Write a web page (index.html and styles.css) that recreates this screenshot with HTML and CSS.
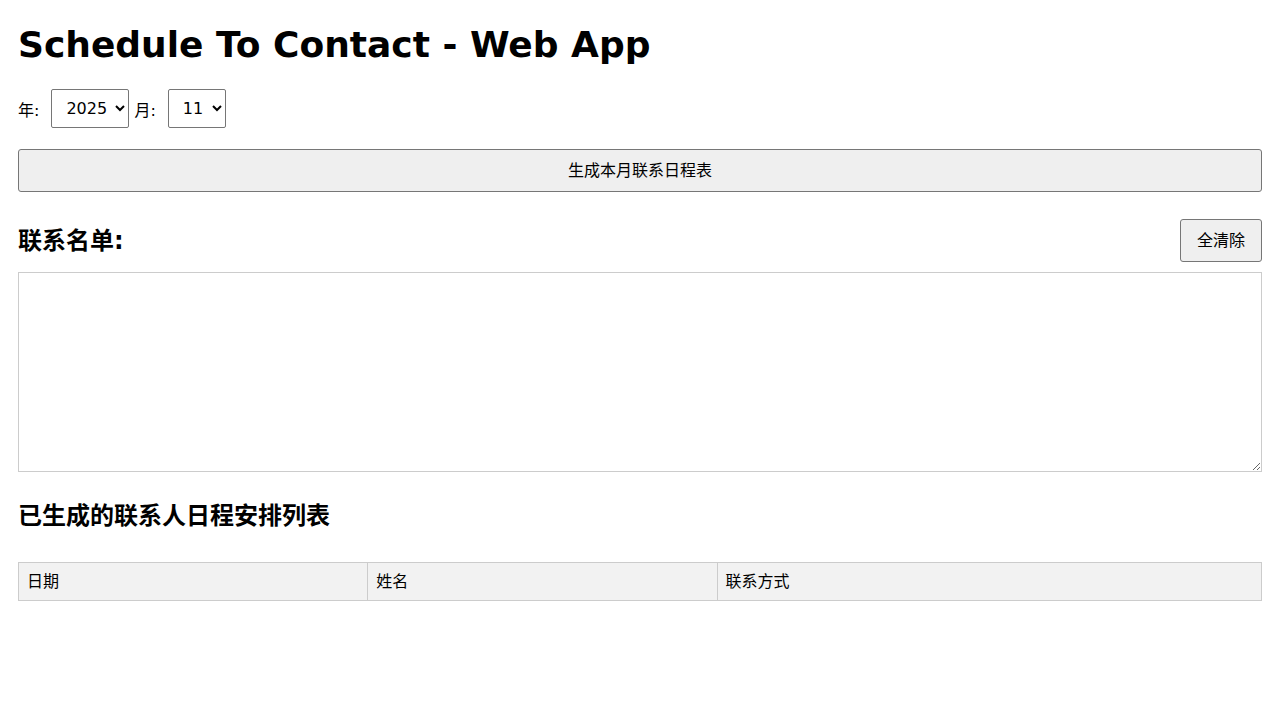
FILE: index.html
```html
<!DOCTYPE html>
<html lang="zh-CN">
<head>
<meta charset="utf-8">
<title>Schedule To Contact - Web App</title>
<link rel="stylesheet" href="styles.css">
</head>
<body>
<main class="app">
  <h1 class="title">Schedule To Contact - Web App</h1>

  <div class="picker">
    <label class="picker-label" for="year">年:</label>
    <select id="year" class="picker-select">
      <option>2024</option>
      <option selected>2025</option>
      <option>2026</option>
    </select>
    <label class="picker-label" for="month">月:</label>
    <select id="month" class="picker-select">
      <option>10</option>
      <option selected>11</option>
      <option>12</option>
    </select>
  </div>

  <button class="btn btn-wide" type="button">生成本月联系日程表</button>

  <div class="section-head">
    <h2 class="section-title">联系名单:</h2>
    <button class="btn" type="button">全清除</button>
  </div>

  <textarea class="names"></textarea>

  <h2 class="section-title result-title">已生成的联系人日程安排列表</h2>

  <table class="schedule">
    <thead>
      <tr>
        <th class="col-date">日期</th>
        <th class="col-name">姓名</th>
        <th class="col-contact">联系方式</th>
      </tr>
    </thead>
    <tbody></tbody>
  </table>
</main>
</body>
</html>
```

FILE: styles.css
```css
html, body {
  margin: 0;
  padding: 0;
  background: #ffffff;
}

body {
  font-family: "DejaVu Sans", "Noto Sans CJK SC", sans-serif;
  color: #000;
  font-size: 16px;
}

.app {
  padding: 24px 18px 18px;
  display: flex;
  flex-direction: column;
}

.title {
  margin: 0;
  font-size: 36px;
  font-weight: bold;
  line-height: 42px;
}

.picker {
  display: flex;
  align-items: center;
  margin-top: 23px;
}

.picker-label {
  font-size: 16px;
  margin-right: 12px;
}

.picker-select {
  font-family: "DejaVu Sans", sans-serif;
  font-size: 16px;
  height: 39px;
  padding: 0 5px 0 10px;
  margin-right: 5px;
  border: 1px solid #767676;
  border-radius: 2px;
  background: #fff;
  color: #000;
}

.btn {
  font-family: "DejaVu Sans", "Noto Sans CJK SC", sans-serif;
  font-size: 16px;
  line-height: 19px;
  padding: 11px 16px;
  background: #efefef;
  border: 1px solid #767676;
  border-radius: 3px;
  color: #000;
}

.btn-wide {
  margin-top: 21px;
  width: 100%;
}

.section-head {
  display: flex;
  justify-content: space-between;
  align-items: center;
  margin-top: 27px;
}

.section-title {
  margin: 0;
  font-size: 24px;
  font-weight: bold;
  line-height: 28px;
}

.names {
  margin-top: 10px;
  height: 200px;
  box-sizing: border-box;
  border: 1px solid #cccccc;
  font-family: "DejaVu Sans", "Noto Sans CJK SC", sans-serif;
  font-size: 14px;
}

.result-title {
  margin-top: 30px;
}

.schedule {
  margin-top: 32px;
  width: 100%;
  border-collapse: collapse;
}

.schedule th {
  background: #f2f2f2;
  border: 1px solid #cccccc;
  padding: 9px 8px;
  text-align: left;
  font-weight: normal;
  font-size: 16px;
  line-height: 19px;
}

.col-date,
.col-name {
  width: 28.1%;
}
```
